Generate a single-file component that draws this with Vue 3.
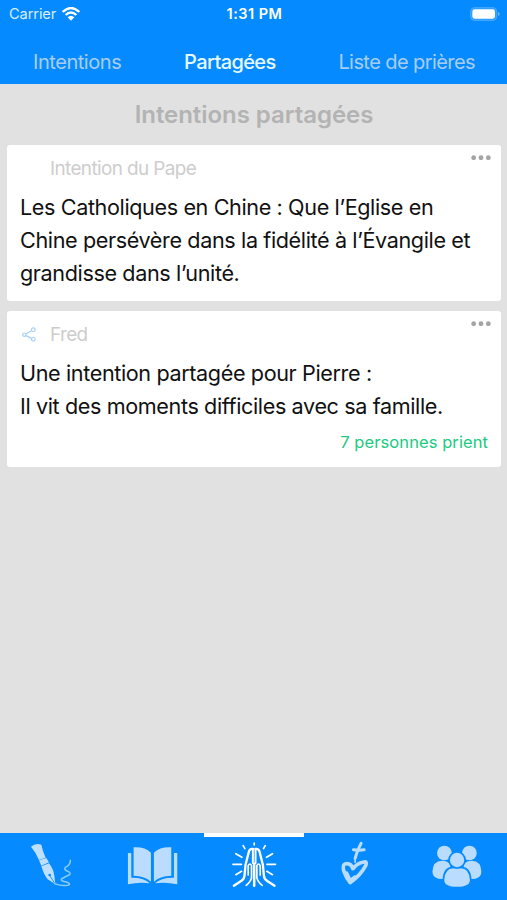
<script setup>
const tabs = [
  { label: 'Intentions', cls: 'tab-one' },
  { label: 'Partagées', cls: 'tab-two active' },
  { label: 'Liste de prières', cls: 'tab-three' },
]

const cards = [
  {
    author: 'Intention du Pape',
    shared: false,
    lines: [
      'Les Catholiques en Chine : Que l’Eglise en',
      'Chine persévère dans la fidélité à l’Évangile et',
      'grandisse dans l’unité.',
    ],
    praying: '',
  },
  {
    author: 'Fred',
    shared: true,
    lines: ['Une intention partagée pour Pierre :', 'Il vit des moments difficiles avec sa famille.'],
    praying: '7 personnes prient',
  },
]
</script>

<template>
  <div class="screen">
    <header class="header">
      <div class="status">
        <div class="carrier">
          <span class="carrier-name">Carrier</span>
          <svg class="wifi" viewBox="0 0 54 42">
            <g fill="none" stroke="#fff" stroke-width="7">
              <path d="M2 15Q27 -9 52 15" />
              <path d="M11 24Q27 9 43 24" />
            </g>
            <path d="M17 31Q27 22 37 31L27 41Z" fill="#fff" />
          </svg>
        </div>
        <span class="clock">1:31 PM</span>
        <svg class="battery" viewBox="0 0 90 42">
          <rect x="2" y="2" width="78" height="38" rx="11" fill="#2b9dff" stroke="#4dabff" stroke-width="3" />
          <rect x="7" y="7" width="68" height="28" rx="7" fill="#fff" />
          <path d="M84 15Q89 17 89 21T84 27Z" fill="#6cbaff" />
        </svg>
      </div>
      <nav class="tabs">
        <span v-for="t in tabs" :key="t.label" class="tab" :class="t.cls">{{ t.label }}</span>
      </nav>
    </header>

    <main class="content">
      <h1 class="title">Intentions partagées</h1>
      <article v-for="c in cards" :key="c.author" class="card">
        <div class="card-head">
          <div class="share-slot">
            <svg v-if="c.shared" class="share" viewBox="0 0 42 45">
              <g fill="none" stroke="#a5d1fb" stroke-width="3.6">
                <circle cx="7" cy="23" r="5" />
                <circle cx="34" cy="8" r="5.5" />
                <circle cx="34" cy="37" r="5.5" />
                <path d="M12 20L29 11M12 26L29 34" />
              </g>
            </svg>
          </div>
          <span class="author">{{ c.author }}</span>
          <svg class="dots" viewBox="0 0 60 16">
            <g fill="#a5a5a5">
              <circle cx="8" cy="8" r="7.2" />
              <circle cx="30" cy="8" r="7.2" />
              <circle cx="52" cy="8" r="7.2" />
            </g>
          </svg>
        </div>
        <p class="text">
          <span v-for="l in c.lines" :key="l" class="line">{{ l }}</span>
        </p>
        <div v-if="c.praying" class="praying">{{ c.praying }}</div>
      </article>
    </main>

    <nav class="bottom">
      <div class="item">
        <svg viewBox="-45 24 304.2 201">
          <path d="M48 65Q61 53 79 59Q83 79 92 98L72 105Q64 84 48 65Z" fill="#bfdfff" />
          <path d="M72 106L94 99L102 112L79 122Z" fill="#bfdfff" />
          <path d="M79 124L102 115Q116 133 118 152L121 178L98 163Q87 150 79 124Z" fill="#bfdfff" />
          <path d="M119 175L104 151" stroke="#0688fb" stroke-width="2.5" fill="none" />
          <circle cx="104" cy="150" r="4" fill="#0688fb" />
          <path d="M119 176Q139 184 158 181Q171 177 154 171Q136 168 139 162Q149 156 162 150Q170 144 159 139Q145 134 151 127Q167 119 166 106" fill="none" stroke="#8bcaff" stroke-width="4.5" stroke-linecap="round" />
        </svg>
      </div>
      <div class="item">
        <svg viewBox="-40.8 24 304.2 201">
          <g fill="#b9dcff">
            <path d="M57 67Q91 65 109 83V170Q92 153 57 152Z" />
            <path d="M170 67Q136 65 118 83V170Q135 153 170 152Z" />
            <path d="M40 84H50V158Q88 157 106 175Q75 170 40 178Z" />
            <path d="M188 84H178V158Q139 157 121 175Q153 170 188 178Z" />
          </g>
        </svg>
      </div>
      <div class="item active-item">
        <svg viewBox="8.4 24 304.2 201">
          <g fill="none" stroke="#fff" stroke-linecap="round" stroke-linejoin="round">
            <path stroke-width="5" d="M162 54V60M129 62L134 71M195 62L190 71M107 86L125 97M217 86L199 97M98 118H124M200 118H226M107 149L124 139M217 149L200 139" />
            <path stroke-width="7" d="M101 182L124 167Q132 162 133 151L136 119L146 80Q149 70 158 72M223 182L200 167Q192 162 191 151L188 119L178 80Q175 70 166 72" />
            <path stroke-width="6" d="M158 72V114M166 72V114" />
            <path stroke-width="7.5" d="M162 116V182" />
            <path stroke-width="5" d="M144 150V122Q149 112 154 122V156Q154 168 138 181M180 150V122Q175 112 170 122V156Q170 168 186 181" />
          </g>
        </svg>
      </div>
      <div class="item">
        <svg viewBox="-47.4 24 304.2 201">
          <g fill="none" stroke="#b9dcff" stroke-linecap="round" stroke-linejoin="round">
            <path stroke-width="9" d="M124 55Q112 76 106 100" />
            <path stroke-width="5" d="M106 98V112" />
            <path stroke-width="9" d="M101 74L118 76L133 74" />
            <path stroke-width="11" d="M99 131Q93 112 75 117Q66 122 74 143Q80 160 91 173Q123 150 138 121Q143 108 132 111Q111 115 101 130" />
            <path stroke-width="12" d="M80 145L91 168L105 157" />
          </g>
        </svg>
      </div>
      <div class="item">
        <svg viewBox="-43.2 24 304.2 201">
          <g fill="#b9dcff">
            <circle cx="72" cy="84" r="22" />
            <circle cx="147" cy="84" r="22" />
            <path d="M36 140Q38 106 66 107Q93 106 91 137Q76 145 70 162Q36 163 36 140Z" />
            <path d="M183 140Q181 106 153 107Q127 106 128 137Q143 145 149 162Q183 163 183 140Z" />
            <g stroke="#058bff" stroke-width="5">
              <path d="M69 165Q70 128 99 127H121Q150 128 151 165Q151 188 110 188Q69 188 69 165Z" />
              <circle cx="110" cy="105" r="24" />
            </g>
          </g>
        </svg>
      </div>
    </nav>
  </div>
</template>

<style>
body {
  margin: 0;
}
</style>

<style scoped>
.screen {
  width: 507px;
  height: 900px;
  display: flex;
  flex-direction: column;
  background: #e1e1e1;
  font-family: Inter, 'Liberation Sans', sans-serif;
  overflow: hidden;
  white-space: nowrap;
}
.header {
  height: 84px;
  background: #058bff;
  flex: none;
}
.status {
  height: 27px;
  display: grid;
  grid-template-columns: 1fr auto 1fr;
  align-items: center;
  padding: 0 7px 0 9px;
  color: #fff;
}
.carrier {
  display: flex;
  align-items: center;
  gap: 6px;
}
.carrier-name {
  font-size: 14.6px;
  letter-spacing: -0.1px;
  color: #d9edff;
}
.wifi {
  width: 18px;
  height: 14px;
}
.clock {
  font-size: 14.5px;
  font-weight: 600;
  letter-spacing: 0.5px;
}
.battery {
  width: 30px;
  height: 14px;
  justify-self: end;
}
.tabs {
  display: flex;
  justify-content: space-between;
  padding: 0 32px 0 33px;
  height: 57px;
  line-height: 70px;
}
.tab {
  font-size: 20px;
  letter-spacing: -0.45px;
  color: #a9cdee;
}
.tab-three {
  letter-spacing: -0.58px;
}
.tab.active {
  color: #e6f9ff;
  font-weight: 500;
  letter-spacing: -0.62px;
}
.content {
  flex: 1;
  padding: 0 6px 0 7px;
}
.title {
  margin: 0;
  height: 61px;
  line-height: 62px;
  text-align: center;
  font-size: 24px;
  font-weight: 600;
  letter-spacing: -0.05px;
  color: #b3b3b3;
}
.card {
  height: 156px;
  background: #fff;
  border-radius: 3px;
  margin-bottom: 10px;
  padding: 0 13px;
  box-sizing: border-box;
}
.card-head {
  display: flex;
  height: 46px;
}
.share-slot {
  width: 30px;
  flex: none;
  padding: 16px 0 0 2px;
  box-sizing: border-box;
}
.share {
  display: block;
  width: 14px;
  height: 15px;
}
.author {
  font-size: 18.9px;
  letter-spacing: -0.6px;
  line-height: 47px;
  color: #cdcdcd;
}
.dots {
  width: 20px;
  height: 5.4px;
  margin: 10px -3px 0 auto;
}
.text {
  margin: 0;
  font-size: 21.6px;
  letter-spacing: -0.38px;
  line-height: 33px;
  color: #111;
}
.line {
  display: block;
}
.praying {
  text-align: right;
  font-size: 16.5px;
  letter-spacing: 0.08px;
  line-height: 38px;
  color: #20ca80;
}
.bottom {
  height: 67px;
  display: grid;
  grid-template-columns: repeat(5, 1fr);
  background: #058bff;
}
.item {
  position: relative;
}
.item svg {
  display: block;
  width: 100%;
  height: 67px;
}
.active-item::before {
  content: '';
  position: absolute;
  top: 0;
  left: 1px;
  right: 0;
  height: 4px;
  background: #fff;
}
</style>
